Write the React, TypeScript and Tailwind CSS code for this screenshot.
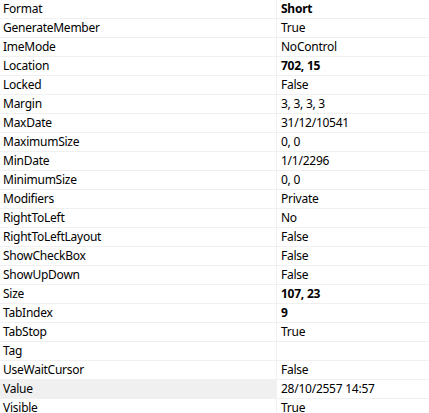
const rows: [string, string, boolean?][] = [
  ['Format', 'Short', true],
  ['GenerateMember', 'True'],
  ['ImeMode', 'NoControl'],
  ['Location', '702, 15', true],
  ['Locked', 'False'],
  ['Margin', '3, 3, 3, 3'],
  ['MaxDate', '31/12/10541'],
  ['MaximumSize', '0, 0'],
  ['MinDate', '1/1/2296'],
  ['MinimumSize', '0, 0'],
  ['Modifiers', 'Private'],
  ['RightToLeft', 'No'],
  ['RightToLeftLayout', 'False'],
  ['ShowCheckBox', 'False'],
  ['ShowUpDown', 'False'],
  ['Size', '107, 23', true],
  ['TabIndex', '9', true],
  ['TabStop', 'True'],
  ['Tag', ''],
  ['UseWaitCursor', 'False'],
  ['Value', '28/10/2557 14:57'],
  ['Visible', 'True'],
]

export default function App() {
  return (
    <div className="w-[429px] h-[413px] overflow-hidden bg-white text-[12px] tracking-[-0.25px] text-black font-['Noto_Sans','Liberation_Sans',sans-serif]">
      {rows.map(([name, value, bold]) => (
        <div key={name} className="flex h-[19px] border-b border-[#f0f0f0]">
          <div className={`w-[276px] pl-[3px] leading-[18px] whitespace-nowrap ${name === 'Value' ? 'bg-[#f0f0f0]' : ''}`}>
            {name}
          </div>
          <div className="w-px bg-[#f0f0f0]" />
          <div className={`flex-1 pl-[4px] leading-[18px] whitespace-nowrap ${bold ? 'font-bold' : ''}`}>
            {value}
          </div>
        </div>
      ))}
    </div>
  )
}
